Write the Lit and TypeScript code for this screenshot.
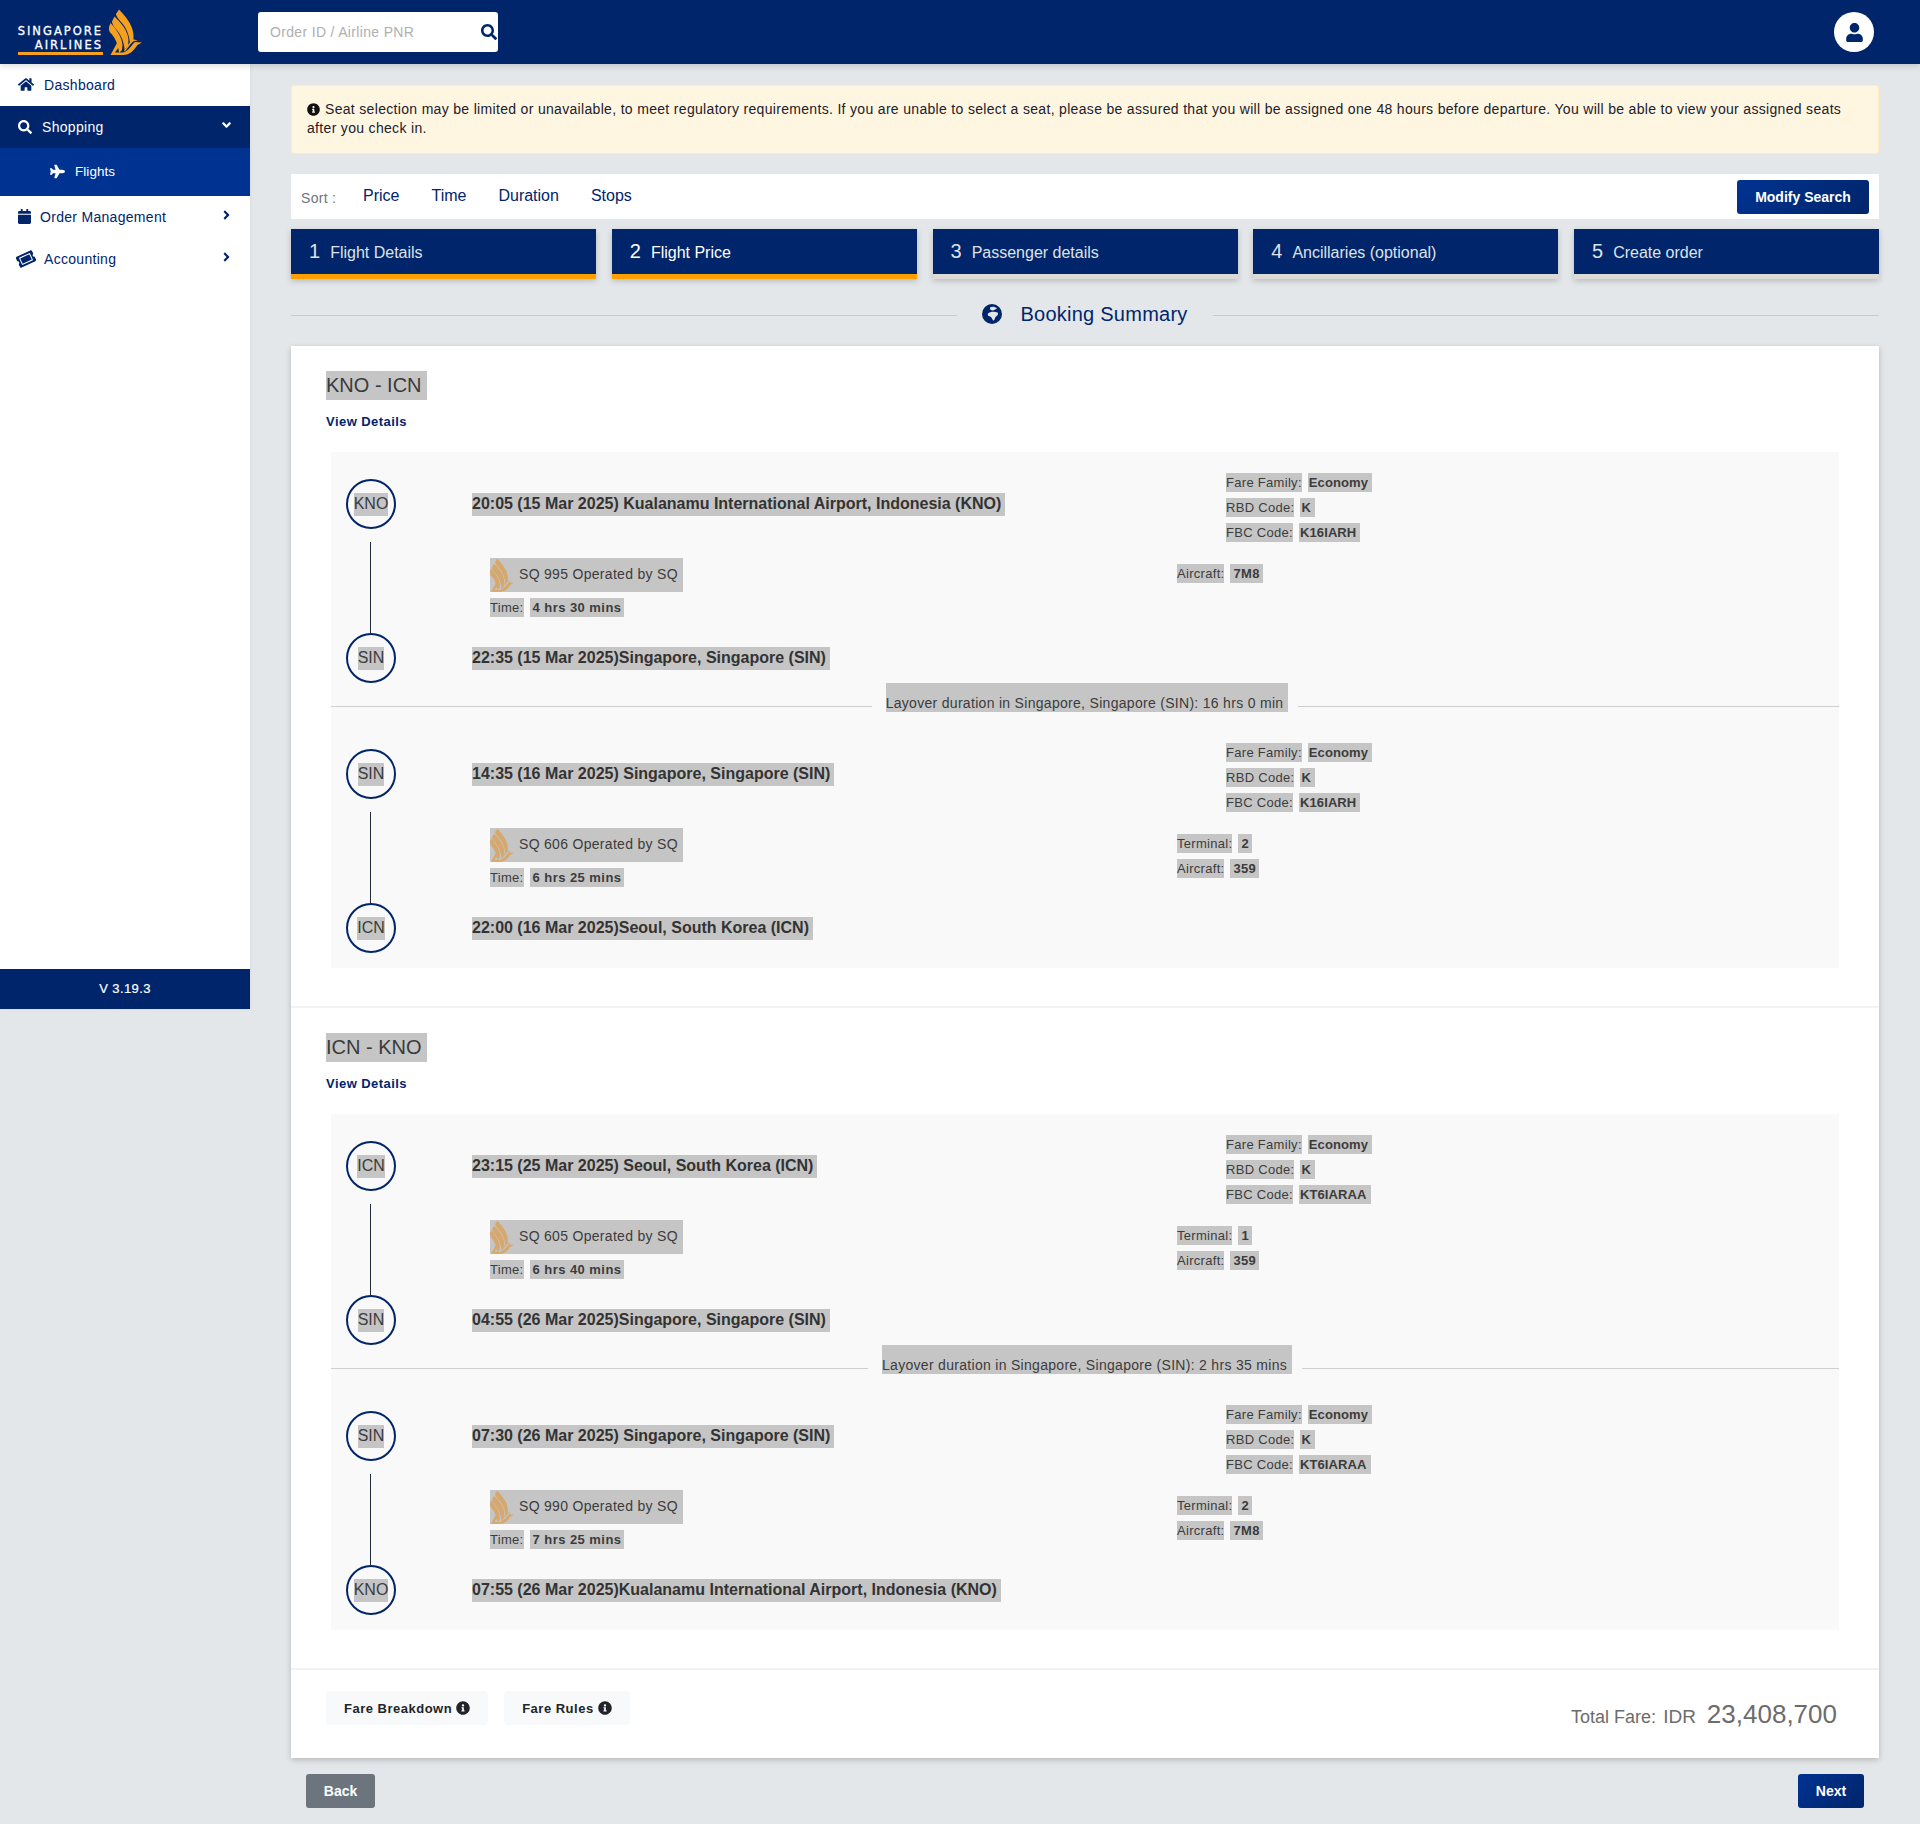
import { LitElement, html, css } from "lit";
import { customElement } from "lit/decorators.js";

const ic = (vb: string, d: string, cls = "") =>
  html`<svg class="ic ${cls}" viewBox="${vb}"><path fill="currentColor" d="${d}"></path></svg>`;

const P = {
  search: "M505 442.7L405.3 343c-4.5-4.5-10.6-7-17-7H372c27.6-35.3 44-79.7 44-128C416 93.1 322.9 0 208 0S0 93.1 0 208s93.1 208 208 208c48.3 0 92.7-16.4 128-44v16.3c0 6.4 2.5 12.5 7 17l99.7 99.7c9.4 9.4 24.6 9.4 33.9 0l28.3-28.3c9.4-9.4 9.4-24.6.1-34zM208 336c-70.7 0-128-57.2-128-128 0-70.7 57.2-128 128-128 70.7 0 128 57.2 128 128 0 70.7-57.2 128-128 128z",
  info: "M256 8C119.043 8 8 119.083 8 256c0 136.997 111.043 248 248 248s248-111.003 248-248C504 119.083 392.957 8 256 8zm0 110c23.196 0 42 18.804 42 42s-18.804 42-42 42-42-18.804-42-42 18.804-42 42-42zm56 254c0 6.627-5.373 12-12 12h-88c-6.627 0-12-5.373-12-12v-24c0-6.627 5.373-12 12-12h12v-64h-12c-6.627 0-12-5.373-12-12v-24c0-6.627 5.373-12 12-12h64c6.627 0 12 5.373 12 12v100h12c6.627 0 12 5.373 12 12v24z",
  home: "M280.37 148.26L96 300.11V464a16 16 0 0 0 16 16l112.06-.29a16 16 0 0 0 15.92-16V368a16 16 0 0 1 16-16h64a16 16 0 0 1 16 16v95.64a16 16 0 0 0 16 16.05L464 480a16 16 0 0 0 16-16V300L295.67 148.26a12.19 12.19 0 0 0-15.3 0zM571.6 251.47L488 182.56V44.05a12 12 0 0 0-12-12h-56a12 12 0 0 0-12 12v72.61L318.47 43a48 48 0 0 0-61 0L4.34 251.47a12 12 0 0 0-1.6 16.9l25.5 31A12 12 0 0 0 45.15 301l235.22-193.74a12.19 12.19 0 0 1 15.3 0L530.9 301a12 12 0 0 0 16.9-1.6l25.5-31a12 12 0 0 0-1.7-16.93z",
  plane: "M480 192H365.71L260.61 8.06A16.014 16.014 0 0 0 246.71 0h-65.5c-10.63 0-18.3 10.17-15.38 20.39L214.86 192H112l-43.2-57.6c-3.02-4.03-7.77-6.4-12.8-6.4H16.01C5.6 128-2.04 137.78.49 147.88L32 256 .49 364.12C-2.04 374.22 5.6 384 16.01 384H56c5.04 0 9.78-2.37 12.8-6.4L112 320h102.86l-49.03 171.6c-2.92 10.22 4.75 20.4 15.38 20.4h65.5c5.74 0 11.04-3.08 13.89-8.06L365.71 320H480c35.35 0 96-28.65 96-64s-60.65-64-96-64z",
  cal: "M12 192h424c6.6 0 12 5.4 12 12v260c0 26.5-21.5 48-48 48H48c-26.5 0-48-21.5-48-48V204c0-6.6 5.4-12 12-12zm436-44v-36c0-26.5-21.5-48-48-48h-48V12c0-6.6-5.4-12-12-12h-40c-6.6 0-12 5.4-12 12v52H160V12c0-6.6-5.4-12-12-12h-40c-6.6 0-12 5.4-12 12v52H48C21.5 64 0 85.5 0 112v36c0 6.6 5.4 12 12 12h424c6.6 0 12-5.4 12-12z",
  ticket: "M128 160h320v192H128V160zm400 96c0 26.51 21.49 48 48 48v96c0 26.51-21.49 48-48 48H48c-26.51 0-48-21.49-48-48v-96c26.51 0 48-21.49 48-48s-21.49-48-48-48v-96c0-26.51 21.49-48 48-48h480c26.51 0 48 21.49 48 48v96c-26.51 0-48 21.49-48 48zm-48-104c0-13.255-10.745-24-24-24H120c-13.255 0-24 10.745-24 24v208c0 13.255 10.745 24 24 24h336c13.255 0 24-10.745 24-24V152z",
  down: "M143 352.3L7 216.3c-9.4-9.4-9.4-24.6 0-33.9l22.6-22.6c9.4-9.4 24.6-9.4 33.9 0l96.4 96.4 96.4-96.4c9.4-9.4 24.6-9.4 33.9 0l22.6 22.6c9.4 9.4 9.4 24.6 0 33.9l-136 136c-9.2 9.4-24.4 9.4-33.8 0z",
  right: "M224.3 273l-136 136c-9.4 9.4-24.6 9.4-33.9 0l-22.6-22.6c-9.4-9.4-9.4-24.6 0-33.9l96.4-96.4-96.4-96.4c-9.4-9.4-9.4-24.6 0-33.9L54.3 103c9.4-9.4 24.6-9.4 33.9 0l136 136c9.5 9.4 9.5 24.6.1 34z",
  user: "M224 256c70.7 0 128-57.3 128-128S294.7 0 224 0 96 57.3 96 128s57.3 128 128 128zm89.6 32h-16.7c-22.2 10.2-46.9 16-72.9 16s-50.6-5.8-72.9-16h-16.7C60.2 288 0 348.2 0 422.4V464c0 26.5 21.5 48 48 48h352c26.5 0 48-21.5 48-48v-41.6c0-74.2-60.2-134.4-134.4-134.4z",
};

const globe = html`<svg class="ic glb" viewBox="0 0 20 20">
  <circle cx="10" cy="10" r="10" fill="currentColor"></circle>
  <path fill="#e4e7ea" d="M8 3.500C10 2.500 13 2.500 15 4.500C14 5.500 12.500 5.500 11 6.500C9.500 6.800 7.500 5.500 8 3.500Z"></path>
  <path fill="#e4e7ea" d="M6 9.500C8 7.500 13 7.500 15.500 8.500C17 10 15 12 13.500 13C12.800 15 12 17 11 16.500C10 14.500 9.500 13 8 12.500C6.500 12 5 11 6 9.500Z"></path>
</svg>`;

const bird = (cls: string) => html`<svg class="${cls}" viewBox="0 0 33 46">
  <path fill="currentColor" d="M10 0.500C15 6 24 15 24.500 26L24.500 31L21 35C20.500 26 17 18 12 13C9.500 10 7 7 7 5Z"></path>
  <path fill="currentColor" d="M5.500 7.500C11 13 19 21 19.500 31L19 37L15.500 40.500C15 31 10 23 6 19C4.500 17 3 14.500 3 12.500Z"></path>
  <path fill="currentColor" d="M1.500 14C7 20 13 28 13.500 36L13 41L10 44C9.500 35 5 27 1.500 24C0 22 -0.500 20 0 18Z"></path>
  <path fill="currentColor" d="M1.500 46L8 34L10 38L6 43.500H13C19 43.500 22 36 26 33L33 33.500L28.500 36C25 41 21 46 14 46Z"></path>
  <path fill="currentColor" d="M15 41.500C18 38 20.500 32 25 30.500L29 31.500L25 32C21 34 19 40 15.500 42.500Z"></path>
</svg>`;

interface Leg {
  fromCode: string; from: string; toCode: string; to: string;
  flight: string; time: string; fbc: string; terminal?: string; aircraft: string;
}

const TRIPS: { route: string; legs: Leg[]; layover: string }[] = [
  {
    route: "KNO - ICN",
    layover: "Layover duration in Singapore, Singapore (SIN): 16 hrs 0 min",
    legs: [
      { fromCode: "KNO", from: "20:05 (15 Mar 2025) Kualanamu International Airport, Indonesia (KNO)", toCode: "SIN", to: "22:35 (15 Mar 2025)Singapore, Singapore (SIN)", flight: "SQ 995 Operated by SQ", time: "4 hrs 30 mins", fbc: "K16IARH", aircraft: "7M8" },
      { fromCode: "SIN", from: "14:35 (16 Mar 2025) Singapore, Singapore (SIN)", toCode: "ICN", to: "22:00 (16 Mar 2025)Seoul, South Korea (ICN)", flight: "SQ 606 Operated by SQ", time: "6 hrs 25 mins", fbc: "K16IARH", terminal: "2", aircraft: "359" },
    ],
  },
  {
    route: "ICN - KNO",
    layover: "Layover duration in Singapore, Singapore (SIN): 2 hrs 35 mins",
    legs: [
      { fromCode: "ICN", from: "23:15 (25 Mar 2025) Seoul, South Korea (ICN)", toCode: "SIN", to: "04:55 (26 Mar 2025)Singapore, Singapore (SIN)", flight: "SQ 605 Operated by SQ", time: "6 hrs 40 mins", fbc: "KT6IARAA", terminal: "1", aircraft: "359" },
      { fromCode: "SIN", from: "07:30 (26 Mar 2025) Singapore, Singapore (SIN)", toCode: "KNO", to: "07:55 (26 Mar 2025)Kualanamu International Airport, Indonesia (KNO)", flight: "SQ 990 Operated by SQ", time: "7 hrs 25 mins", fbc: "KT6IARAA", terminal: "2", aircraft: "7M8" },
    ],
  },
];

const STEPS = [
  { n: 1, t: "Flight Details", cls: "done" },
  { n: 2, t: "Flight Price", cls: "active" },
  { n: 3, t: "Passenger details", cls: "" },
  { n: 4, t: "Ancillaries (optional)", cls: "" },
  { n: 5, t: "Create order", cls: "" },
];

@customElement("app-root")
export class AppRoot extends LitElement {
  static styles = css`
    :host { display: block; width: 1920px; height: 1824px; background: #e4e7ea; font-family: "Liberation Sans", Arial, sans-serif; color: #3c3c3c; overflow: hidden; }
    * { box-sizing: border-box; }
    .ic { display: block; flex: none; }
    .hdr { height: 64px; background: #00256a; display: flex; align-items: center; position: relative; z-index: 2; box-shadow: 0 2px 6px rgba(0,0,0,.15); }
    .logo { width: 258px; height: 64px; padding: 9px 0 0 18px; display: flex; flex: none; }
    .logo-t { width: 86px; margin-right: 5px; display: flex; flex-direction: column; align-items: flex-end; color: #fff; font-family: "DejaVu Sans", sans-serif; font-size: 11.500px; line-height: 13.500px; letter-spacing: 2px; padding: 16px 1px 0 0; -webkit-text-stroke: .3px #fff; }
    .logo-t span { display: block; white-space: nowrap; }
    .logo-t i { display: block; width: 85px; height: 3px; background: #f5a01e; align-self: flex-start; }
    .logo-b { width: 33px; height: 46px; color: #f5a01e; }
    .srch { width: 240px; height: 40px; background: #fff; border-radius: 3px; display: flex; align-items: center; justify-content: space-between; padding: 0 1px 0 12px; font-size: 14px; color: #b0b0b0; letter-spacing: .33px; }
    .srch .ic { width: 16px; height: 16px; color: #00256a; }
    .prof { width: 40px; height: 40px; border-radius: 50%; background: #fff; margin-left: auto; margin-right: 46px; color: #00256a; display: flex; align-items: center; justify-content: center; }
    .prof .ic { width: 17px; height: 19px; }
    .body { display: flex; align-items: flex-start; }
    .side { width: 250px; flex: none; box-shadow: 0 0 3px rgba(0,0,0,.08); }
    .menu { height: 905px; background: #fff; color: #00256a; font-size: 14px; letter-spacing: .3px; }
    .mi { height: 42px; display: flex; align-items: center; padding: 0 0 1px 18px; }
    .mi .lead { color: #00256a; width: 15px; height: 15px; }
    .mi .lead.tk { width: 18px; height: 16px; transform: rotate(-25deg); margin-left: -1px; }
    .mi .lead.hm { width: 16px; }
    .mi .lead.sr { width: 14px; height: 14px; }
    .mi .lead.cl { width: 13px; }
    .mi .ar { width: 9px; height: 14px; margin-left: auto; margin-right: 19px; margin-bottom: 4px; }
    .mi.on { background: #00256a; color: #fff; }
    .mi.on .lead { color: #fff; }
    .mi.sub { height: 48px; background: #003391; color: #fff; padding-left: 50px; font-size: 13.500px; letter-spacing: .05px; }
    .mi.sub .lead { color: #fff; }
    .mi .txt { margin-left: 10px; }
    .mi .txt.n { margin-left: 9px; }
    .ver { height: 40px; background: #00256a; color: #fff; font-size: 13px; letter-spacing: .4px; display: flex; align-items: center; justify-content: center; padding-bottom: 1px; -webkit-text-stroke: .2px #fff; }
    .main { width: 1670px; padding: 21px 41px 0; }
    .alert { height: 69px; background: #fff6e2; border: 1px solid #ffeeba; border-radius: 3px; padding: 14px 15px 0; font-size: 14px; line-height: 19px; color: #20202a; letter-spacing: .32px; }
    .alert .ic { display: inline-block; width: 13px; height: 13px; vertical-align: -1.500px; margin-right: 5px; color: #111; }
    .sort { margin-top: 20px; height: 45px; background: #fff; display: flex; align-items: center; padding: 0 10px; font-size: 16px; color: #00256a; }
    .sort .lb { color: #6c757d; font-size: 14px; width: 62px; padding-top: 2px; letter-spacing: .3px; }
    .sort .it { margin-right: 32px; font-size: 16px; position: relative; top: -1px; }
    .btn { height: 34px; border-radius: 3px; color: #fff; font-weight: 700; font-size: 14px; display: flex; align-items: center; justify-content: center; background: linear-gradient(135deg, #003391, #00256a); }
    .sort .btn { width: 132px; margin-left: auto; }
    .steps { margin-top: 10px; display: grid; grid-template-columns: repeat(5, 305px); justify-content: space-between; }
    .st { height: 50px; background: #00256a; border-bottom: 5px solid #dcdad5; display: flex; align-items: center; padding: 2px 0 0 18px; color: #dfe2e8; font-size: 16px; box-shadow: 0 2px 6px rgba(0,0,0,.2); }
    .st b { font-weight: 400; font-size: 20px; margin-right: 10px; position: relative; top: -1px; }
    .st.done, .st.active { border-bottom-color: #ffa000; }
    .st.active { color: #fff; }
    .sum { margin-top: 20px; height: 30px; display: flex; align-items: center; color: #00256a; font-size: 20px; letter-spacing: .25px; }
    .sum i { flex: 1; height: 1px; background: #c6cbd0; position: relative; top: 1px; }
    .sum .ic { width: 20px; height: 20px; margin: 0 18px 0 25px; }
    .sum span { margin-right: 25px; }
    .card { margin-top: 17px; background: #fff; box-shadow: 0 2px 6px rgba(0,0,0,.2); height: 1412px; }
    .trip { height: 662px; padding: 25px 40px 0 35px; border-bottom: 2px solid #f3f3f3; }
    .route { display: inline-block; font-size: 20px; line-height: 29px; background: #c5c5c5; padding: 0 5px 0 0; color: #3a3a3a; }
    .vd { font-size: 13px; font-weight: 700; color: #00256a; margin-top: 14px; line-height: 16px; letter-spacing: .45px; }
    .panel { margin: 22px 0 0 5px; background: #f9f9f9; }
    .leg { padding: 21px 0 0 15px; display: grid; grid-template-columns: 126px 705px 1fr; grid-template-rows: 69px 91px 49px; }
    .leg.last { padding-bottom: 16px; }
    .circ { width: 50px; height: 50px; border-radius: 50%; border: 2px solid #00256a; display: flex; align-items: center; justify-content: center; font-size: 16px; }
    .circ span { display: inline-block; line-height: 22px; padding-bottom: 1px; background: #c5c5c5; }
    .circ.a { margin-top: 6px; }
    .vline { width: 1px; background: #222b3f; margin-left: 24px; }
    .ttl { display: inline-block; font-size: 16px; font-weight: 700; line-height: 22px; padding: 0 4px 1px 0; background: #c5c5c5; white-space: nowrap; color: #333; }
    .ttl-w.a { padding-top: 20px; }
    .ttl-w.b { padding-top: 14px; }
    .kv { display: flex; height: 19px; margin-bottom: 6px; font-size: 13px; line-height: 19px; letter-spacing: .3px; white-space: nowrap; }
    .kv .k { background: #c5c5c5; }
    .kv .v { background: #c5c5c5; font-weight: 700; margin-left: 6px; padding: 0 3px; }
    .fare .kv .v { letter-spacing: .1px; padding: 0 4px 0 1px; }
    .fare { padding-left: 49px; }
    .eqp { padding-top: 22px; }
    .fl { padding: 16px 0 0 18px; }
    .fl-b { display: flex; width: fit-content; align-items: center; height: 34px; background: #c5c5c5; padding-right: 5px; font-size: 14px; letter-spacing: .3px; }
    .fl-b span { padding-bottom: 2px; }
    .fl-b svg { width: 24px; height: 34px; color: #d6a86e; margin-right: 5px; }
    .fl .kv { margin-top: 6px; }
    .fl .kv .v { letter-spacing: .45px; }
    .lay { height: 40px; padding-top: 1px; display: flex; align-items: flex-start; font-size: 14px; letter-spacing: .3px; }
    .lay i { flex: 1; height: 1px; background: #cfcfcf; margin-top: 23px; }
    .lay span { height: 29px; padding-top: 11px; line-height: 18px; background: #c5c5c5; margin: 0 10px 0 14px; padding-right: 5px; white-space: nowrap; }
    .foot { height: 88px; padding: 21px 42px 0 35px; display: flex; align-items: flex-start; }
    .fb { height: 34px; padding: 0 18px; display: flex; align-items: center; background: #f8f9fa; border-radius: 4px; margin-right: 16px; font-size: 13px; font-weight: 700; color: #212529; letter-spacing: .5px; }
    .fb .ic { width: 14px; height: 14px; margin-left: 4px; }
    .tot { margin-left: auto; color: #6c6c6c; font-size: 19px; display: flex; align-items: baseline; padding-top: 8px; }
    .tot span:first-child { font-size: 18px; margin-right: 7px; }
    .tot b { font-weight: 400; font-size: 26px; margin-left: 11px; }
    .nav { margin-top: 16px; padding: 0 15px; display: flex; justify-content: space-between; }
    .nav .back { width: 69px; background: #6c757d; }
    .nav .next { width: 66px; }
  `;

  private fare(fbc: string) {
    return html`
      <div class="kv"><span class="k">Fare Family:</span><span class="v">Economy</span></div>
      <div class="kv"><span class="k">RBD Code:</span><span class="v">K</span></div>
      <div class="kv"><span class="k">FBC Code:</span><span class="v">${fbc}</span></div>`;
  }

  private leg(l: Leg, last: boolean) {
    return html`<div class="leg ${last ? "last" : ""}">
      <div class="circ a"><span>${l.fromCode}</span></div>
      <div class="ttl-w a"><span class="ttl">${l.from}</span></div>
      <div class="fare">${this.fare(l.fbc)}</div>
      <div class="vline"></div>
      <div class="fl">
        <div class="fl-b">${bird("")}<span>${l.flight}</span></div>
        <div class="kv"><span class="k">Time:</span><span class="v">${l.time}</span></div>
      </div>
      <div class="eqp">
        ${l.terminal ? html`<div class="kv"><span class="k">Terminal:</span><span class="v">${l.terminal}</span></div>` : ""}
        <div class="kv"><span class="k">Aircraft:</span><span class="v">${l.aircraft}</span></div>
      </div>
      <div class="circ"><span>${l.toCode}</span></div>
      <div class="ttl-w b"><span class="ttl">${l.to}</span></div>
      <div></div>
    </div>`;
  }

  render() {
    return html`
      <div class="hdr">
        <div class="logo">
          <div class="logo-t"><span>SINGAPORE</span><span>AIRLINES</span><i></i></div>
          ${bird("logo-b")}
        </div>
        <div class="srch"><span>Order ID / Airline PNR</span>${ic("0 0 512 512", P.search)}</div>
        <div class="prof">${ic("0 0 448 512", P.user)}</div>
      </div>
      <div class="body">
        <div class="side">
          <div class="menu">
            <div class="mi">${ic("0 0 576 512", P.home, "lead hm")}<span class="txt">Dashboard</span></div>
            <div class="mi on">${ic("0 0 512 512", P.search, "lead sr")}<span class="txt">Shopping</span>${ic("0 0 320 512", P.down, "ar")}</div>
            <div class="mi sub">${ic("0 0 576 512", P.plane, "lead")}<span class="txt">Flights</span></div>
            <div class="mi">${ic("0 0 448 512", P.cal, "lead cl")}<span class="txt n">Order Management</span>${ic("0 0 256 512", P.right, "ar")}</div>
            <div class="mi">${ic("0 0 576 512", P.ticket, "lead tk")}<span class="txt n">Accounting</span>${ic("0 0 256 512", P.right, "ar")}</div>
          </div>
          <div class="ver">V 3.19.3</div>
        </div>
        <div class="main">
          <div class="alert">${ic("0 0 512 512", P.info)}Seat selection may be limited or unavailable, to meet regulatory requirements. If you are unable to select a seat, please be assured that you will be assigned one 48 hours before departure. You will be able to view your assigned seats after you check in.</div>
          <div class="sort">
            <span class="lb">Sort :</span>
            <span class="it">Price</span><span class="it">Time</span><span class="it">Duration</span><span class="it">Stops</span>
            <div class="btn">Modify Search</div>
          </div>
          <div class="steps">
            ${STEPS.map((s) => html`<div class="st ${s.cls}"><b>${s.n}</b>${s.t}</div>`)}
          </div>
          <div class="sum"><i></i>${globe}<span>Booking Summary</span><i></i></div>
          <div class="card">
            ${TRIPS.map((t) => html`<div class="trip">
              <div class="route">${t.route}</div>
              <div class="vd">View Details</div>
              <div class="panel">
                ${this.leg(t.legs[0], false)}
                <div class="lay"><i></i><span>${t.layover}</span><i></i></div>
                ${this.leg(t.legs[1], true)}
              </div>
            </div>`)}
            <div class="foot">
              <div class="fb">Fare Breakdown${ic("0 0 512 512", P.info)}</div>
              <div class="fb">Fare Rules${ic("0 0 512 512", P.info)}</div>
              <div class="tot"><span>Total Fare:</span><span>IDR</span><b>23,408,700</b></div>
            </div>
          </div>
          <div class="nav"><div class="btn back">Back</div><div class="btn next">Next</div></div>
        </div>
      </div>`;
  }
}
